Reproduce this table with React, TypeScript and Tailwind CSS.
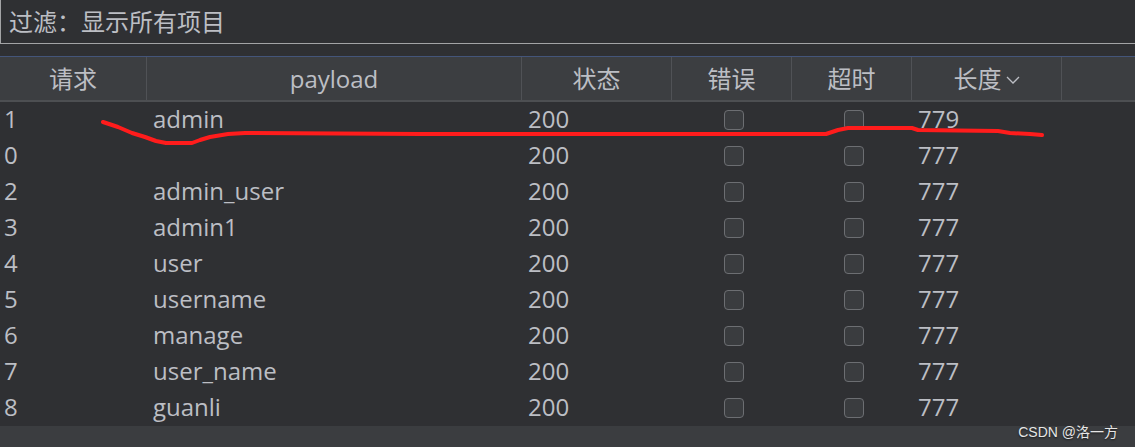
import React from 'react';

interface Row {
  id: string;
  payload: string;
  status: string;
  length: string;
}

const ROWS: Row[] = [
  { id: '1', payload: 'admin', status: '200', length: '779' },
  { id: '0', payload: '', status: '200', length: '777' },
  { id: '2', payload: 'admin_user', status: '200', length: '777' },
  { id: '3', payload: 'admin1', status: '200', length: '777' },
  { id: '4', payload: 'user', status: '200', length: '777' },
  { id: '5', payload: 'username', status: '200', length: '777' },
  { id: '6', payload: 'manage', status: '200', length: '777' },
  { id: '7', payload: 'user_name', status: '200', length: '777' },
  { id: '8', payload: 'guanli', status: '200', length: '777' },
];

const Checkbox: React.FC = () => (
  <div className="w-[20px] h-[20px] rounded-[4px] border border-[#6c6e72] bg-[#3a3c3f]" />
);

const App: React.FC = () => {
  return (
    <div
      className="relative w-[1135px] h-[447px] overflow-hidden bg-[#2f3033] text-[#bcbec4] flex flex-col"
      style={{ fontFamily: '"Open Sans", "Noto Sans CJK SC", sans-serif' }}
    >
      {/* filter bar */}
      <div className="h-[44px] shrink-0 border-l border-b border-[#a3a4a6] flex items-center px-2 text-[24px] leading-none">
        过滤：显示所有项目
      </div>
      <div className="h-[12px] shrink-0" />

      {/* header */}
      <div className="flex shrink-0 h-[46px] bg-[#3c3e41] border-t border-t-[#44557a] border-b-2 border-b-[#4d4f52] text-[24px] leading-none">
        <div className="w-[147px] flex items-center justify-center border-r border-[#505256]">请求</div>
        <div className="w-[375px] flex items-center justify-center border-r border-[#505256]">payload</div>
        <div className="w-[150px] flex items-center justify-center border-r border-[#505256]">状态</div>
        <div className="w-[120px] flex items-center justify-center border-r border-[#505256]">错误</div>
        <div className="w-[120px] flex items-center justify-center border-r border-[#505256]">超时</div>
        <div className="w-[150px] flex items-center justify-center gap-[4px] border-r border-[#505256]">
          长度
          <svg width="14" height="8" viewBox="0 0 14 8" className="shrink-0 mt-[2px]">
            <polyline points="1,1 7,7 13,1" fill="none" stroke="currentColor" strokeWidth={1.3} />
          </svg>
        </div>
        <div className="flex-1" />
      </div>

      {/* rows */}
      <div className="flex flex-col shrink-0">
        {ROWS.map(r => (
          <div key={r.id} className="flex h-[36px] items-center pb-[2px] text-[24px] leading-none">
            <div className="w-[147px] pl-[4px]">{r.id}</div>
            <div className="w-[375px] pl-[6px]">{r.payload}</div>
            <div className="w-[150px] pl-[6px]">{r.status}</div>
            <div className="w-[120px] flex justify-center pl-[4px] pt-[2px]"><Checkbox /></div>
            <div className="w-[120px] flex justify-center pl-[4px] pt-[2px]"><Checkbox /></div>
            <div className="w-[150px] pl-[6px]">{r.length}</div>
          </div>
        ))}
      </div>

      {/* bottom strip */}
      <div className="flex-1 bg-[#3b3d40]" />

      {/* red annotation stroke */}
      <svg className="absolute inset-0 pointer-events-none" width="1135" height="447">
        <polyline
          points="103,122 118,127 132,133 145,137 156,141 166,143 192,143 200,140 210,137 228,134 245,133 420,134 600,134 826,134 838,130 848,128 912,128 918,130 998,131 1010,133 1030,134 1042,135"
          fill="none"
          stroke="#ff1c1c"
          strokeWidth={4}
          strokeLinejoin="round"
          strokeLinecap="round"
        />
      </svg>

      {/* watermark */}
      <div
        className="absolute right-[17px] bottom-[8px] text-[14px] leading-none text-[#e6e6e6] [text-shadow:0_1px_2px_rgba(0,0,0,0.6)]"
        style={{ fontFamily: '"Liberation Sans", "Noto Sans CJK SC", sans-serif' }}
      >
        CSDN @洛一方
      </div>
    </div>
  );
};

export default App;
